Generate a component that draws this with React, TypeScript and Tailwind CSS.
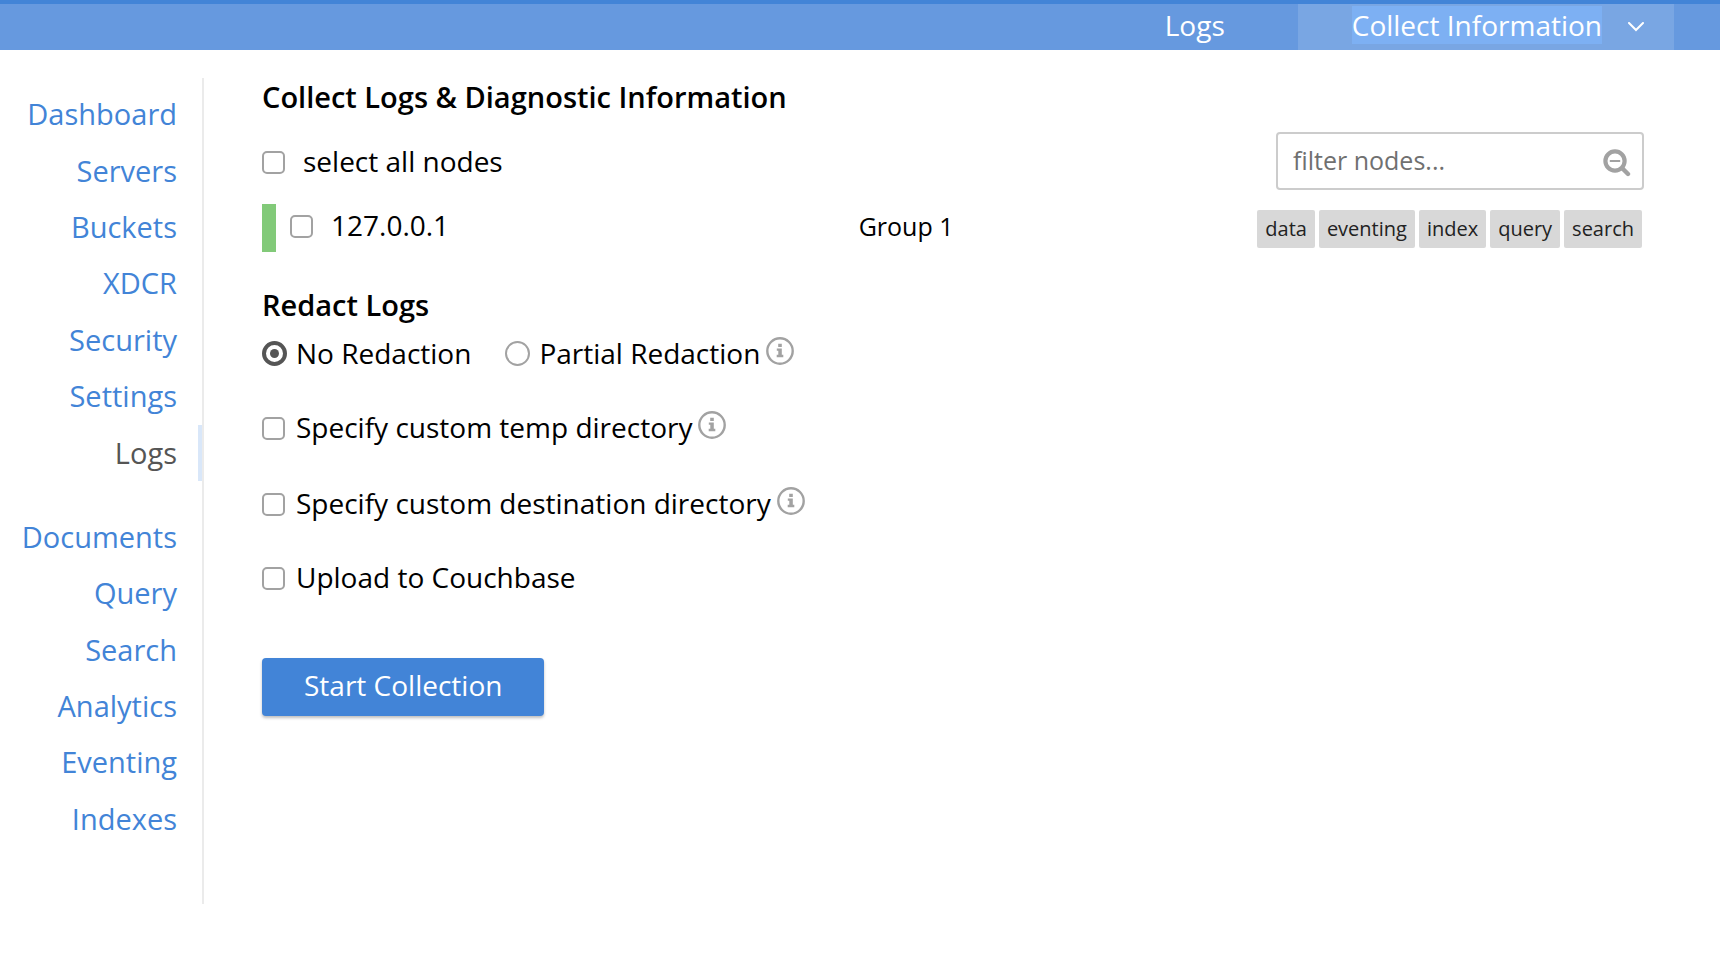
import { useState, type ReactNode } from "react";

const primaryLinks = ["Dashboard", "Servers", "Buckets", "XDCR", "Security", "Settings", "Logs"];
const secondaryLinks = ["Documents", "Query", "Search", "Analytics", "Eventing", "Indexes"];
const services = ["data", "eventing", "index", "query", "search"];

function NavGroup({ links, active, className }: { links: string[]; active?: string; className: string }) {
  return (
    <ul className={`grid auto-rows-fr text-[29px] ${className}`}>
      {links.map((link) => (
        <li key={link} className="flex">
          <a
            href={`#${link.toLowerCase()}`}
            aria-current={link === active ? "page" : undefined}
            className={
              link === active
                ? "flex flex-1 items-center justify-end border-r-4 border-[#d9e7f9] pr-[21px] text-[#555]"
                : "flex flex-1 items-center justify-end pr-[25px] text-[#4284d7]"
            }
          >
            {link}
          </a>
        </li>
      ))}
    </ul>
  );
}

function Checkbox({ id, label, gap = "gap-[11px]" }: { id: string; label: string; gap?: string }) {
  return (
    <div className={`flex items-center ${gap}`}>
      <input
        id={id}
        type="checkbox"
        className="mt-[2px] size-[23px] shrink-0 appearance-none rounded-[5px] border-2 border-[#a2a2a2] bg-white checked:bg-[#555]"
      />
      <label htmlFor={id}>{label}</label>
    </div>
  );
}

function Radio({ id, label, checked, onChange }: { id: string; label: string; checked: boolean; onChange: () => void }) {
  return (
    <div className="flex items-center gap-[9px]">
      <input
        id={id}
        type="radio"
        name="redaction"
        checked={checked}
        onChange={onChange}
        className="grid size-[25px] shrink-0 appearance-none place-items-center rounded-full border-2 border-[#a2a2a2] bg-white checked:border-4 checked:border-[#555] checked:before:size-[9px] checked:before:rounded-full checked:before:bg-[#555] checked:before:content-['']"
      />
      <label htmlFor={id}>{label}</label>
    </div>
  );
}

function InfoButton({ label }: { label: string }) {
  return (
    <button type="button" aria-label={label} className="mb-[5px] text-[#a2a2a2]">
      <svg viewBox="0 0 28 28" className="block size-7" fill="none">
        <circle cx="14" cy="14" r="12.7" stroke="currentColor" strokeWidth="2.4" />
        <path d="M12.2 6.8h3.6v3.2h-3.6zM10.8 11.6h5v6.2h1.5v2.4h-6.6v-2.4h1.6v-4h-1.5z" fill="currentColor" />
      </svg>
    </button>
  );
}

function Row({ children, className = "" }: { children: ReactNode; className?: string }) {
  return <div className={`flex h-9 items-center gap-[6px] ${className}`}>{children}</div>;
}

export default function App() {
  const [redaction, setRedaction] = useState("none");

  return (
    <div className="min-h-screen bg-white font-['Open_Sans',sans-serif] text-[28px] leading-9 text-black">
      <header className="border-t-4 border-[#4284d7] bg-[#6699df] pr-[46px] text-white">
        <nav className="flex h-[46px] justify-end">
          <a href="#logs" className="flex items-center px-[73px] pb-1">
            Logs
          </a>
          <a href="#collect" className="flex items-center gap-[26px] bg-[#79a6e3] pr-[30px] pb-1 pl-[54px]">
            <span className="bg-[#7db0f3] leading-[38px]">Collect Information</span>
            <svg viewBox="0 0 16 10" className="mt-1 h-[10px] w-4" fill="none" stroke="currentColor" strokeWidth="2">
              <path d="M1 1l7 7 7-7" strokeLinecap="round" />
            </svg>
          </a>
        </nav>
      </header>

      <div className="flex">
        <aside className="mt-7 min-h-[826px] w-[204px] shrink-0 border-r-2 border-[#ebebeb] pt-2">
          <NavGroup links={primaryLinks} active="Logs" className="min-h-[395px]" />
          <NavGroup links={secondaryLinks} className="mt-7 min-h-[338px]" />
        </aside>

        <main className="flex-1 pt-[29px] pr-[76px] pl-[58px]">
          <h1 className="text-[29px] font-semibold">Collect Logs &amp; Diagnostic Information</h1>

          <div className="mt-[17px] flex items-center justify-between">
            <Checkbox id="all-nodes" label="select all nodes" gap="gap-[18px]" />
            <div className="flex h-[58px] w-[368px] items-center rounded-[4px] border-2 border-[#ccc] pr-[11px] pl-[15px]">
              <input
                type="text"
                aria-label="filter nodes"
                placeholder="filter nodes..."
                className="min-w-0 flex-1 pb-[2px] text-[25px] outline-none placeholder:text-[#707070]"
              />
              <svg viewBox="0 0 28 28" className="mt-1 size-7 shrink-0 text-[#a2a2a2]" fill="none" stroke="currentColor">
                <circle cx="12" cy="12" r="9.6" strokeWidth="4.2" />
                <path d="M19.5 19.5l5.5 5.5" strokeWidth="4.4" strokeLinecap="round" />
                <path d="M6.8 12h10.4" strokeWidth="2" />
              </svg>
            </div>
          </div>

          <div className="mt-[14px] flex h-12 items-center border-l-[14px] border-[#82ca79] pl-[14px]">
            <div className="flex w-[42%] items-center pb-[6px]">
              <Checkbox id="node-1" label="127.0.0.1" gap="gap-[18px]" />
            </div>
            <div className="flex flex-1 items-center justify-between">
              <span className="pb-1 text-[25px]">Group 1</span>
              <ul className="mt-[2px] mr-[2px] flex gap-1 text-[20px] text-[#222]">
                {services.map((service) => (
                  <li key={service} className="rounded-[2px] bg-[#d8d8d8] px-2 leading-[38px]">
                    {service}
                  </li>
                ))}
              </ul>
            </div>
          </div>

          <form onSubmit={(event) => event.preventDefault()}>
            <h2 className="mt-[35px] text-[29px] font-semibold">Redact Logs</h2>
            <Row className="mt-3">
              <Radio id="redact-none" label="No Redaction" checked={redaction === "none"} onChange={() => setRedaction("none")} />
              <div className="ml-7">
                <Radio
                  id="redact-partial"
                  label="Partial Redaction"
                  checked={redaction === "partial"}
                  onChange={() => setRedaction("partial")}
                />
              </div>
              <InfoButton label="About redaction" />
            </Row>
            <Row className="mt-[38px]">
              <Checkbox id="temp-dir" label="Specify custom temp directory" />
              <InfoButton label="About the temp directory" />
            </Row>
            <Row className="mt-10">
              <Checkbox id="dest-dir" label="Specify custom destination directory" />
              <InfoButton label="About the destination directory" />
            </Row>
            <Row className="mt-[38px]">
              <Checkbox id="upload" label="Upload to Couchbase" />
            </Row>
            <button
              type="submit"
              className="mt-[63px] h-[58px] rounded-[4px] bg-[#4284d7] px-[42px] pb-1 text-white shadow-[0_2px_3px_rgba(0,0,0,0.25)]"
            >
              Start Collection
            </button>
          </form>
        </main>
      </div>
    </div>
  );
}
